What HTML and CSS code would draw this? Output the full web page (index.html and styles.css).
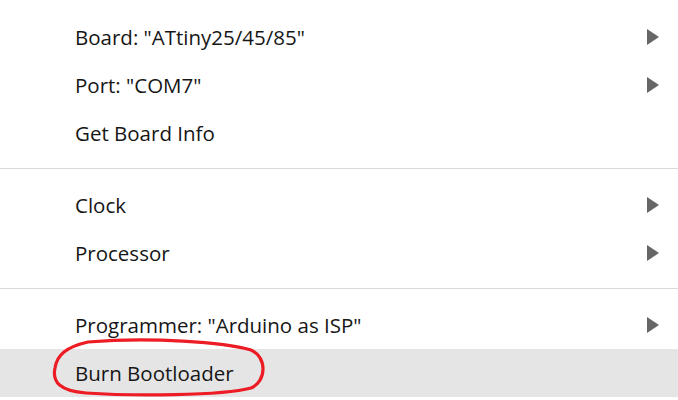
FILE: index.html
```html
<!DOCTYPE html>
<html>
<head>
<meta charset="utf-8">
<link rel="stylesheet" href="styles.css">
</head>
<body>
<div class="menu">
  <div class="item"><span class="label">Board: "ATtiny25/45/85"</span><span class="arrow"></span></div>
  <div class="item"><span class="label">Port: "COM7"</span><span class="arrow"></span></div>
  <div class="item"><span class="label">Get Board Info</span></div>
  <div class="sep"></div>
  <div class="item"><span class="label">Clock</span><span class="arrow"></span></div>
  <div class="item"><span class="label">Processor</span><span class="arrow"></span></div>
  <div class="sep"></div>
  <div class="item"><span class="label">Programmer: "Arduino as ISP"</span><span class="arrow"></span></div>
  <div class="item hover"><span class="label">Burn Bootloader</span></div>
</div>
<svg class="mark" width="678" height="400" viewBox="0 0 678 400">
  <path d="M 88 342 C 150 337, 224 342, 251 350 C 267 357, 267 381, 251 388 C 222 396, 130 396, 86 393 C 60 391, 52 382, 55 368 C 57 355, 66 347, 88 342 Z" fill="none" stroke="#ed1c24" stroke-width="3.2"/>
</svg>
</body>
</html>
```
FILE: styles.css
```css
html, body {
  margin: 0;
  padding: 0;
  background: #ffffff;
}
body {
  width: 678px;
  height: 400px;
  overflow: hidden;
  position: relative;
  font-family: "Open Sans", "Noto Sans", sans-serif;
  color: #161616;
}
.menu {
  padding-top: 13px;
  display: flex;
  flex-direction: column;
}
.item {
  height: 48px;
  display: flex;
  align-items: center;
  justify-content: space-between;
  padding-left: 75px;
  padding-right: 19px;
  font-size: 20.5px;
}
.item.hover {
  background: #e5e5e5;
}
.label {
  white-space: nowrap;
}
.arrow {
  width: 0;
  height: 0;
  border-top: 8px solid transparent;
  border-bottom: 8px solid transparent;
  border-left: 12px solid #666666;
}
.sep {
  height: 1px;
  background: #dadada;
  margin: 11px 0 12px 0;
}
.mark {
  position: absolute;
  left: 0;
  top: 0;
  pointer-events: none;
}
```
